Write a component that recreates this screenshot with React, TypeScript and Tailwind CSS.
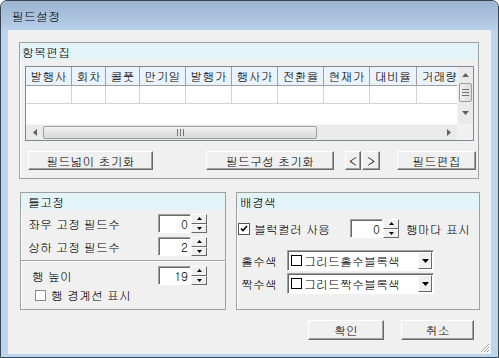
import React from 'react'

const font = "font-['Gulim','Noto_Sans_CJK_KR','Noto_Sans',sans-serif]"

function Btn({ label, className = '' }: { label: string; className?: string }) {
  return (
    <div className={`flex items-center justify-center h-[19px] bg-[#f0f0f0] border border-t-white border-l-white border-r-[#696969] border-b-[#696969] shadow-[inset_-1px_-1px_0_#a0a0a0] text-[12px] text-black ${className}`}>
      {label}
    </div>
  )
}

function Spin({ value }: { value: string }) {
  return (
    <div className="flex h-[19px]">
      <div className="w-[33px] h-full bg-white border border-t-[#a0a0a0] border-l-[#a0a0a0] border-r-white border-b-white shadow-[inset_1px_1px_0_#696969] flex items-center justify-end pr-[2px] text-[12px] leading-none">
        {value}
      </div>
      <div className="w-[16px] h-full flex flex-col">
        <div className="flex-1 bg-[#f0f0f0] border border-t-white border-l-white border-r-[#696969] border-b-[#696969] flex items-center justify-center">
          <svg width="5" height="3" viewBox="0 0 5 3"><path d="M2.5 0 L5 3 L0 3 Z" fill="#000" /></svg>
        </div>
        <div className="flex-1 bg-[#f0f0f0] border border-t-white border-l-white border-r-[#696969] border-b-[#696969] flex items-center justify-center">
          <svg width="5" height="3" viewBox="0 0 5 3"><path d="M0 0 L5 0 L2.5 3 Z" fill="#000" /></svg>
        </div>
      </div>
    </div>
  )
}

function Group({ title, titleClass = 'pl-[2px]', className = '', children }: { title: string; titleClass?: string; className?: string; children?: React.ReactNode }) {
  return (
    <div className={`border border-[#a0a0a0] shadow-[inset_1px_1px_0_#ffffff] flex flex-col ${className}`}>
      <div className={`h-[17px] bg-[#e3f4f8] flex items-center text-[12px] leading-none ${titleClass}`}>{title}</div>
      {children}
    </div>
  )
}

function Combo({ label }: { label: string }) {
  return (
    <div className="w-[147px] h-[21px] bg-white border border-t-[#a0a0a0] border-l-[#a0a0a0] border-r-white border-b-white shadow-[inset_1px_1px_0_#696969] flex items-center">
      <div className="w-[11px] h-[11px] border border-black bg-white ml-[3px] mr-[2px]" />
      <span className="text-[12px] leading-none flex-1">{label}</span>
      <div className="w-[14px] h-[17px] mr-[1px] bg-[#f0f0f0] border border-t-white border-l-white border-r-[#696969] border-b-[#696969] flex items-center justify-center">
        <svg width="7" height="4" viewBox="0 0 7 4"><path d="M0 0 L7 0 L3.5 4 Z" fill="#000" /></svg>
      </div>
    </div>
  )
}

const columns: { name: string; w: number }[] = [
  { name: '발행사', w: 46 },
  { name: '회차', w: 34 },
  { name: '콜풋', w: 34 },
  { name: '만기일', w: 46 },
  { name: '발행가', w: 46 },
  { name: '행사가', w: 46 },
  { name: '전환율', w: 46 },
  { name: '현재가', w: 46 },
  { name: '대비율', w: 47 },
  { name: '거래량', w: 46 },
]

function Grid() {
  return (
    <div className="w-[449px] h-[75px] border border-[#828790] bg-white flex flex-col ml-[5px] mt-[6px]">
      <div className="flex flex-1 min-h-0">
        <div className="flex-1 overflow-hidden flex flex-col">
          <div className="flex h-[19px] bg-[#eaf2fb] shrink-0">
            {columns.map(c => (
              <div key={c.name} style={{ width: c.w }} className="shrink-0 border-r border-b border-[#a0a0a0] flex items-center justify-center text-[12px] leading-none whitespace-nowrap">
                {c.name}
              </div>
            ))}
          </div>
          <div className="flex h-[18px] shrink-0">
            {columns.map(c => (
              <div key={c.name} style={{ width: c.w }} className="shrink-0 border-r border-b border-[#d4d4d4]" />
            ))}
          </div>
        </div>
        <div className="w-[16px] bg-[#eaeaea] flex flex-col border-l border-[#f4f4f4]">
          <div className="h-[16px] flex items-center justify-center">
            <svg width="7" height="4" viewBox="0 0 7 4"><path d="M3.5 0 L7 4 L0 4 Z" fill="#606060" /></svg>
          </div>
          <div className="mx-[1px] h-[19px] rounded-[2px] border border-[#9e9e9e] bg-gradient-to-r from-[#f0f0f0] to-[#dcdcdc] flex flex-col items-center justify-center gap-[2px]">
            <div className="w-[7px] h-px bg-[#707070]" />
            <div className="w-[7px] h-px bg-[#707070]" />
            <div className="w-[7px] h-px bg-[#707070]" />
          </div>
          <div className="flex-1 flex items-center justify-center">
            <svg width="7" height="4" viewBox="0 0 7 4"><path d="M0 0 L7 0 L3.5 4 Z" fill="#606060" /></svg>
          </div>
        </div>
      </div>
      <div className="h-[16px] flex bg-[#eaeaea] border-t border-[#f4f4f4]">
        <div className="w-[17px] flex items-center justify-center">
          <svg width="4" height="7" viewBox="0 0 4 7"><path d="M0 3.5 L4 0 L4 7 Z" fill="#606060" /></svg>
        </div>
        <div className="w-[274px] my-[1px] rounded-[2px] border border-[#9e9e9e] bg-gradient-to-b from-[#f2f2f2] to-[#d8d8d8] flex items-center justify-center gap-[2px]">
          <div className="w-px h-[7px] bg-[#707070]" />
          <div className="w-px h-[7px] bg-[#707070]" />
          <div className="w-px h-[7px] bg-[#707070]" />
        </div>
        <div className="flex-1 flex items-center justify-end pr-[6px]">
          <svg width="4" height="7" viewBox="0 0 4 7"><path d="M0 0 L4 3.5 L0 7 Z" fill="#606060" /></svg>
        </div>
        <div className="w-[16px] bg-[#f0f0f0]" />
      </div>
    </div>
  )
}

export default function App() {
  return (
    <div className={`w-[499px] h-[358px] ${font} text-black bg-white`}>
      <div className="w-full h-full rounded-t-[7px] border border-[#3a4656] bg-[#bcd4ec] flex flex-col overflow-hidden">
        {/* title bar */}
        <div className="h-[29px] shrink-0 bg-gradient-to-b from-[#9bb4d1] to-[#b7cfe8] flex items-center pl-[11px] text-[12px]">
          필드설정
        </div>

        {/* client */}
        <div className="mx-[7px] h-[324px] bg-[#f0f0f0] flex flex-col relative">
          <Group title="항목편집" className="ml-[11px] mt-[12px] w-[460px] h-[137px]">
            <Grid />
            <div className="flex items-center mt-[10px]">
              <Btn label="필드넓이 초기화" className="ml-[8px] w-[125px]" />
              <Btn label="필드구성 초기화" className="ml-[53px] w-[128px]" />
              <Btn label="<" className="ml-[11px] w-[16px]" />
              <Btn label=">" className="ml-[1px] w-[18px]" />
              <Btn label="필드편집" className="ml-[17px] w-[79px]" />
            </div>
          </Group>

          <div className="flex mt-[13px] ml-[12px]">
            <Group title="틀고정" titleClass="pl-[7px]" className="w-[206px] h-[118px]">
              <div className="flex items-center mt-[4px] pl-[7px]">
                <span className="text-[12px] w-[130px]">좌우 고정 필드수</span>
                <Spin value="0" />
              </div>
              <div className="flex items-center mt-[4px] pl-[7px]">
                <span className="text-[12px] w-[130px]">상하 고정 필드수</span>
                <Spin value="2" />
              </div>
              <div className="mt-[4px] h-[2px] border-t border-[#a0a0a0] border-b border-b-white" />
              <div className="flex items-center mt-[4px] pl-[11px]">
                <span className="text-[12px] w-[126px]">행 높이</span>
                <Spin value="19" />
              </div>
              <div className="flex items-center mt-[4px] pl-[14px]">
                <div className="w-[11px] h-[11px] bg-white border border-[#8a8a8a] mr-[5px]" />
                <span className="text-[12px] leading-none">행 경계선 표시</span>
              </div>
            </Group>

            <Group title="배경색" titleClass="pl-[3px]" className="ml-[10px] w-[244px] h-[118px]">
              <div className="flex items-center mt-[9px] pl-[1px]">
                <div className="w-[12px] h-[12px] bg-white border border-[#555] flex items-center justify-center mr-[4px]">
                  <svg width="8" height="7" viewBox="0 0 8 7"><path d="M1 3.5 L3 5.5 L7 1" stroke="#000" strokeWidth="1.6" fill="none" /></svg>
                </div>
                <span className="text-[12px] w-[96px] leading-none">블럭컬러 사용</span>
                <Spin value="0" />
                <span className="text-[12px] ml-[7px] leading-none">행마다 표시</span>
              </div>
              <div className="flex items-center mt-[12px] pl-[4px]">
                <span className="text-[12px] w-[46px] leading-none">홀수색</span>
                <Combo label="그리드홀수블록색" />
              </div>
              <div className="flex items-center mt-[2px] pl-[4px]">
                <span className="text-[12px] w-[46px] leading-none">짝수색</span>
                <Combo label="그리드짝수블록색" />
              </div>
            </Group>
          </div>

          <div className="flex mt-[10px] ml-[300px]">
            <Btn label="확인" className="w-[76px] h-[20px] border-[#3c3c3c] border-t-[#3c3c3c] border-l-[#3c3c3c]" />
            <Btn label="취소" className="ml-[17px] w-[73px] h-[20px]" />
          </div>

          <svg className="absolute right-[1px] bottom-[1px]" width="11" height="11" viewBox="0 0 11 11">
            <path d="M10 2 L2 10 M10 5 L5 10 M10 8 L8 10" stroke="#a0a0a0" strokeWidth="1" />
            <path d="M11 3 L3 11 M11 6 L6 11 M11 9 L9 11" stroke="#ffffff" strokeWidth="1" />
          </svg>
        </div>
      </div>
    </div>
  )
}
